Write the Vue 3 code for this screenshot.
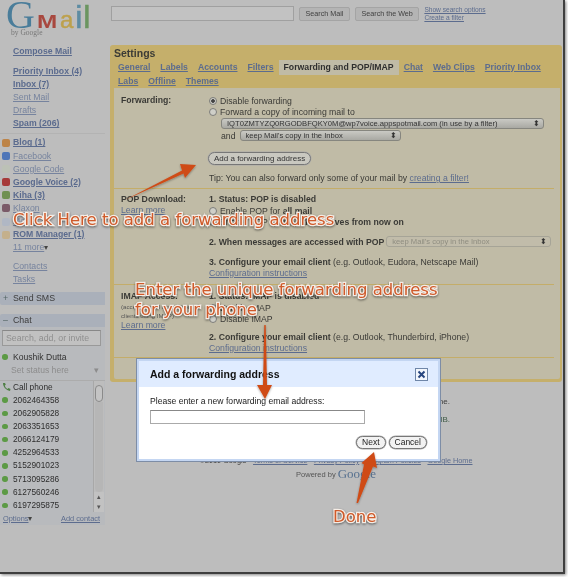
<template>
  <div class="shot">
    <div class="window">
      <aside class="side">
        <div class="logo">
          <span class="lg-g">G</span><span class="lg-m">M</span><span class="lg-a">a</span><span class="lg-i">i</span><span class="lg-l">l</span>
          <span class="by">by Google</span>
        </div>
        <a class="nav compose">Compose Mail</a>
        <div class="group">
          <a v-for="n in mailNav" :key="n.t" class="nav" :class="{ bold: n.b }">{{ n.t }}</a>
        </div>
        <div class="rule"></div>
        <div class="group labels">
          <div v-for="l in labels" :key="l.t" class="label-row">
            <span class="swatch" :style="{ background: l.c }"></span>
            <a class="nav" :class="{ bold: l.b }">{{ l.t }}</a>
          </div>
          <a class="nav more">11 more<span class="tri">▾</span></a>
        </div>
        <div class="group extras">
          <a class="nav">Contacts</a>
          <a class="nav">Tasks</a>
        </div>
        <div class="bar sms"><b>+</b>Send SMS</div>
        <div class="bar chat"><b>–</b>Chat</div>
        <div class="chat-body">
          <div class="chat-search">Search, add, or invite</div>
          <div class="me"><i class="dot"></i>Koushik Dutta</div>
          <div class="status">Set status here<span>▾</span></div>
          <div class="contacts">
            <div class="contact-list">
              <div class="contact">
                <svg class="phone" width="9" height="10" viewBox="0 0 9 10"><path d="M1 1c0 4 3 7 7 8l.5-2-2-1-1 1C4 6 3 5 2.800 3.500l1-.8L3 1z" fill="#4f7f45"/></svg>Call phone
              </div>
              <div v-for="p in phones" :key="p" class="contact"><i class="dot"></i>{{ p }}</div>
            </div>
            <div class="scroll">
              <div class="thumb"></div>
              <div class="track"></div>
              <div class="step">▴</div>
              <div class="step">▾</div>
            </div>
          </div>
          <div class="chat-foot"><a>Options<span class="tri">▾</span></a><a>Add contact</a></div>
        </div>
      </aside>

      <main class="main">
        <div class="search">
          <div class="search-box"></div>
          <div class="btn">Search Mail</div>
          <div class="btn">Search the Web</div>
          <div class="search-links"><a>Show search options</a><a>Create a filter</a></div>
        </div>

        <section class="settings">
          <h1>Settings</h1>
          <div class="tabs">
            <a v-for="t in tabs1" :key="t" :class="{ active: t === 'Forwarding and POP/IMAP' }">{{ t }}</a>
          </div>
          <div class="tabs second">
            <a v-for="t in tabs2" :key="t">{{ t }}</a>
          </div>

          <div class="panel">
            <div class="row fwd">
              <div class="lab"><b>Forwarding:</b></div>
              <div class="val">
                <div class="radio-line"><i class="radio on"></i>Disable forwarding</div>
                <div class="radio-line"><i class="radio"></i>Forward a copy of incoming mail to</div>
                <div class="sel wide">IQT0ZMTYZQ0RGODBFQKY0M@wp7voice.appspotmail.com (in use by a filter)<span>⬍</span></div>
                <div class="and">and <div class="sel keep">keep Mail's copy in the Inbox<span>⬍</span></div></div>
                <div class="pill add">Add a forwarding address</div>
                <div class="tip">Tip: You can also forward only some of your mail by <a>creating a filter!</a></div>
              </div>
            </div>
            <div class="row pop">
              <div class="lab"><b>POP Download:</b><a>Learn more</a></div>
              <div class="val">
                <b class="line">1. Status: POP is disabled</b>
                <div class="radio-line"><i class="radio"></i>Enable POP for <b>all mail</b></div>
                <div class="radio-line"><i class="radio"></i>Enable POP for <b>mail that arrives from now on</b></div>
                <div class="when"><b>2. When messages are accessed with POP</b><div class="sel dim">keep Mail's copy in the Inbox<span>⬍</span></div></div>
                <div class="line cfg"><b>3. Configure your email client</b> (e.g. Outlook, Eudora, Netscape Mail)</div>
                <a class="line">Configuration instructions</a>
              </div>
            </div>
            <div class="row imap">
              <div class="lab">
                <b>IMAP Access:</b>
                <small>(access Gmail from other</small>
                <small>clients using IMAP)</small>
                <a>Learn more</a>
              </div>
              <div class="val">
                <b class="line">1. Status: IMAP is disabled</b>
                <div class="radio-line tight"><i class="radio"></i>Enable IMAP</div>
                <div class="radio-line tight"><i class="radio"></i>Disable IMAP</div>
                <div class="line cfg2"><b>2. Configure your email client</b> (e.g. Outlook, Thunderbird, iPhone)</div>
                <a class="line">Configuration instructions</a>
              </div>
            </div>
            <div class="panel-end"></div>
          </div>
        </section>

        <footer class="foot">
          <div class="usage">Get Gmail on your mobile phone.</div>
          <div class="usage green">You are currently using 3512 MB (47%) of your 7471 MB.</div>
          <div class="legal">©2010 Google - <a>Terms of Service</a> - <a>Privacy Policy</a> - <a>Program Policies</a> - <a>Google Home</a></div>
          <div class="powered">Powered by <span class="goog">Google</span></div>
        </footer>
      </main>
    </div>

    <div class="modal">
      <div class="modal-head">
        <strong>Add a forwarding address</strong>
        <span class="close">
          <svg width="9" height="9" viewBox="0 0 9 9"><path d="M1.500 1.500l6 6M7.500 1.500l-6 6" stroke="#27457f" stroke-width="2"/></svg>
        </span>
      </div>
      <div class="modal-body">
        <p>Please enter a new forwarding email address:</p>
        <div class="modal-input"></div>
        <div class="modal-btns">
          <div class="pill">Next</div>
          <div class="pill">Cancel</div>
        </div>
      </div>
    </div>

    <svg class="arrows" width="568" height="577" viewBox="0 0 568 577">
      <g fill="#cf4b17" filter="url(#ds)">
        <polygon points="125,200 182,170.500 180,164 196,165 185,178 183.500,173.500" />
        <polygon points="264.300,325 265.700,325 267,385 272,385 265,399 257,385 263,385" />
        <polygon points="356.500,503 364,464.500 361.500,463 374,452 377,468 373,466.500 358,503" />
      </g>
      <defs>
        <filter id="ds" x="-20%" y="-20%" width="140%" height="140%">
          <feDropShadow dx="0" dy="1" stdDeviation="1" flood-color="#000" flood-opacity="0.35" />
        </filter>
      </defs>
    </svg>

    <div class="note n1">Click Here to add a forwarding address</div>
    <div class="note n2">Enter the unique forwarding address<br>for your phone</div>
    <div class="note n3">Done</div>
  </div>
</template>

<script setup>
const mailNav = [
  { t: 'Priority Inbox (4)', b: true },
  { t: 'Inbox (7)', b: true },
  { t: 'Sent Mail' },
  { t: 'Drafts' },
  { t: 'Spam (206)', b: true }
]

const labels = [
  { t: 'Blog (1)', c: '#bd8448', b: true },
  { t: 'Facebook', c: '#4f76b8' },
  { t: 'Google Code', c: '#bcc1b6' },
  { t: 'Google Voice (2)', c: '#a63a3a', b: true },
  { t: 'Kiha (3)', c: '#6f9052', b: true },
  { t: 'Klaxon', c: '#7a5a68' },
  { t: 'Mobile', c: '#b0b7c4' },
  { t: 'ROM Manager (1)', c: '#c4b08c', b: true }
]

const phones = [
  '2062464358', '2062905828', '2063351653', '2066124179', '4252964533',
  '5152901023', '5713095286', '6127560246', '6197295875'
]

const tabs1 = ['General', 'Labels', 'Accounts', 'Filters', 'Forwarding and POP/IMAP', 'Chat', 'Web Clips', 'Priority Inbox']
const tabs2 = ['Labs', 'Offline', 'Themes']
</script>

<style>
html, body { margin: 0; background: #fff; }
</style>

<style scoped>
.shot {
  position: relative;
  width: 568px;
  height: 577px;
  overflow: hidden;
  background: #fff;
  font-family: "Liberation Sans", Arial, sans-serif;
  font-size: 10px;
  color: #2e2e2e;
  filter: blur(0.35px);
}
a { color: #5c6c8e; text-decoration: underline; }
.window {
  display: flex;
  width: 563px;
  height: 572px;
  background: #bdbdbd;
  border-right: 2px solid #3f3f3f;
  border-bottom: 2px solid #3f3f3f;
  box-shadow: 1px 1px 3px rgba(0, 0, 0, 0.5);
  overflow: hidden;
}

/* left column */
.side { width: 105px; flex: none; display: flex; flex-direction: column; }
.logo { height: 45px; padding: 0 0 0 6px; position: relative; display: flex; align-items: baseline; line-height: 0.74; white-space: nowrap; box-sizing: border-box; }
.lg-g { font-family: "Liberation Serif", serif; font-size: 40px; color: #4a7d9a; }
.lg-m { font-size: 18px; font-weight: 700; color: #a8483f; transform: scaleX(1.35); transform-origin: left bottom; margin-left: 2px; width: 23px; }
.lg-a { font-size: 24px; color: #bda14d; margin-right: 2px; -webkit-text-stroke: 0.5px #bda14d; }
.lg-i { font-size: 32px; color: #5d8ca3; margin-right: 1px; -webkit-text-stroke: 0.6px #5d8ca3; }
.lg-l { font-size: 32px; color: #6b9560; -webkit-text-stroke: 0.6px #6b9560; }
.logo .by { position: absolute; left: 11px; top: 28px; font-family: "Liberation Serif", serif; font-size: 7.500px; line-height: 9px; color: #777; }
.nav { display: block; height: 13.100px; line-height: 13px; font-size: 8.700px; color: #76839e; white-space: nowrap; padding-left: 13px; }
.nav.bold { font-weight: 700; color: #5b6b8e; }
.compose { font-weight: 700; height: 14px; margin-bottom: 6px; color: #5b6b8e; }
.rule { height: 1px; background: #b3b3b3; margin: 3px 0 2px; }
.label-row { display: flex; align-items: center; height: 13.100px; padding-left: 2px; }
.label-row .nav { padding-left: 3px; }
.swatch { width: 8px; height: 8px; border-radius: 2px; flex: none; }
.tri { font-size: 8px; color: #444; text-decoration: none; display: inline-block; }
.extras { margin-top: 6px; }
.bar { height: 13px; line-height: 13px; font-size: 8.800px; background: #aab0ba; color: #3c3c3c; padding-left: 3px; margin-top: 5px; border-radius: 2px 0 0 2px; }
.bar b { display: inline-block; width: 10px; font-weight: 400; color: #566; }
.chat { margin-top: 9px; }
.chat-body { background: #b8babd; height: 198px; display: flex; flex-direction: column; }
.chat-search { margin: 3px 4px 0 2px; height: 14px; line-height: 14px; border: 1px solid #999; border-top-color: #888; background: #c1c1c1; color: #8f8f8f; font-size: 8.800px; padding-left: 3px; white-space: nowrap; }
.me { height: 13px; line-height: 13px; margin-top: 5px; font-size: 8.600px; color: #333; padding-left: 2px; display: flex; align-items: center; }
.dot { width: 5.500px; height: 5.500px; border-radius: 50%; background: #5c9a45; margin-right: 5.500px; flex: none; display: block; }
.status { height: 13px; line-height: 13px; color: #8c8c8c; font-size: 8.600px; padding-left: 11px; display: flex; justify-content: space-between; padding-right: 6px; }
.contacts { display: flex; margin-top: 3px; border-top: 1px solid #acacac; height: 131px; }
.contact-list { flex: 1; overflow: hidden; }
.contact { height: 13.150px; line-height: 13px; padding-left: 2px; display: flex; align-items: center; font-size: 8.300px; color: #2e2e2e; }
.phone { margin-right: 2px; flex: none; }
.scroll { width: 10px; margin-right: 1px; display: flex; flex-direction: column; background: #bdbdbd; border-left: 1px solid #a8a8a8; }
.thumb { height: 15px; margin: 4px 1px 0; border: 1.500px solid #8a8a8a; border-radius: 5px; background: #c4c4c4; }
.track { flex: 1; background: #b6b6b6; border-radius: 0 0 4px 4px; margin: 0 1px; }
.step { height: 10px; line-height: 10px; font-size: 7px; text-align: center; color: #555; background: #c2c2c2; }
.chat-foot { display: flex; justify-content: space-between; padding: 0 5px 0 3px; height: 13px; line-height: 14px; font-size: 7.400px; }

/* right column */
.main { flex: 1; min-width: 0; padding-left: 5px; }
.search { display: flex; align-items: center; height: 45px; box-sizing: border-box; padding-bottom: 18px; margin-left: 1px; }
.search-box { width: 181px; height: 13px; border: 1px solid #a0a0a0; background: #c2c2c2; margin-right: 5px; }
.btn { height: 12px; line-height: 12px; padding: 0 5.500px; border: 1px solid #a4a4a4; border-radius: 2px; background: #b4b4b4; color: #3f3f3f; font-size: 7.200px; margin-right: 5px; white-space: nowrap; }
.search-links { display: flex; flex-direction: column; font-size: 6.600px; line-height: 7.500px; }
.settings { background: #c5af6b; border-radius: 3px; width: 452px; height: 337px; box-sizing: border-box; padding: 2px 2px 3px 4px; display: flex; flex-direction: column; }
h1 { margin: 0; font-size: 10.500px; line-height: 13px; font-weight: 700; color: #3c3c36; }
.tabs { display: flex; height: 15px; line-height: 15px; padding-left: 4px; font-size: 8.700px; font-weight: 700; color: #5c6c8e; }
.tabs a { margin-right: 10px; white-space: nowrap; }
.tabs a.active { background: #c0bba6; color: #2f2f2f; text-decoration: none; padding: 0 5px; margin: 0 5px 0 -5px; }
.tabs.second { height: 13px; line-height: 13px; }
.panel { flex: 1; background: #c0bba6; padding-right: 3px; display: flex; flex-direction: column; border-radius: 0 0 2px 2px; font-size: 8.700px; color: #3a3a36; }
.row { display: grid; grid-template-columns: 95px 1fr; border-bottom: 1px solid #c4ad69; margin-right: 3px; box-sizing: border-box; }
.fwd { height: 101px; padding-top: 7px; }
.pop { height: 96px; padding-top: 5px; }
.imap { height: 73px; padding-top: 6px; }
.lab { padding-left: 7px; display: flex; flex-direction: column; line-height: 11px; }
.lab small { font-size: 6.200px; line-height: 9px; color: #555; white-space: nowrap; }
.line { display: block; height: 11px; line-height: 11px; white-space: nowrap; }
.radio-line { display: flex; align-items: center; height: 11.500px; white-space: pre; }
.radio { width: 6px; height: 6px; border: 1px solid #7d7d7a; border-radius: 50%; background: #cfcfc8; margin-right: 3px; flex: none; display: block; }
.radio.on { background: radial-gradient(circle, #444 0 1.500px, #cfcfc8 2.200px); }
.sel { display: flex; justify-content: space-between; align-items: center; height: 9px; border: 1px solid #86867f; border-radius: 3px; background: linear-gradient(#c9c9c4, #a9a9a3); font-size: 7.600px; line-height: 9px; padding: 0 3px 0 5px; color: #333; white-space: nowrap; }
.sel span { font-size: 8px; color: #333; }
.wide { width: 313px; margin-left: 12px; }
.and { display: flex; align-items: center; height: 13px; margin-left: 12px; }
.keep { width: 151px; margin-left: 4px; }
.pill { display: inline-block; height: 11px; line-height: 11px; border: 1px solid #777; border-radius: 7px; background: #c9c8c0; padding: 0 5px; font-size: 8px; color: #333; white-space: nowrap; box-shadow: 0 0 0 0.500px #aaa; }
.add { margin: 10px 0 0 -1px; width: fit-content; display: block; }
.tip { height: 11px; line-height: 11px; margin-top: 8px; white-space: nowrap; }
.when { display: flex; align-items: center; height: 13px; margin-top: 7px; white-space: nowrap; }
.dim { width: 155px; margin-left: 2px; background: #c1bcaa; color: #8f8d80; border-color: #a6a497; }
.cfg { margin-top: 9px; }
.cfg2 { margin-top: 7px; }
.panel-end { height: 21px; }

.foot { width: 452px; font-size: 8px; color: #3c3c3c; }
.usage { margin-top: 15px; text-align: right; padding-right: 112px; white-space: nowrap; }
.usage.green { margin-top: 9px; color: #3d5a45; }
.legal { margin-top: 32px; text-align: center; font-size: 7.300px; white-space: nowrap; }
.powered { margin-top: 1px; color: #555; display: flex; justify-content: center; align-items: center; gap: 2px; font-size: 7.500px; white-space: nowrap; }
.goog { font-family: "Liberation Serif", serif; font-size: 13px; color: #56708f; }

/* dialog on top of the dimmed page */
.modal { position: absolute; left: 136px; top: 358px; width: 305px; height: 104px; box-sizing: border-box; border: 1px solid #7d8da6; box-shadow: inset 0 0 0 2px #c4d6f2; background: #fff; }
.modal-head { margin: 2px 2px 0; height: 26px; background: #e0ecff; display: flex; align-items: center; justify-content: space-between; padding: 0 10px 0 11px; }
.modal-head strong { font-size: 10.500px; color: #111; }
.close { width: 11px; height: 11px; border: 1px solid #6f86a8; background: #f2f6fc; display: flex; align-items: center; justify-content: center; }
.modal-body { padding: 9px 13px 0 13px; }
.modal-body p { margin: 0; font-size: 8.600px; line-height: 11px; color: #222; }
.modal-input { width: 213px; height: 12px; border: 1px solid #aaa; border-top-color: #888; margin-top: 3px; }
.modal-btns { display: flex; justify-content: flex-end; gap: 3px; margin-top: 12px; }
.modal-btns .pill { background: #f2f2f2; border-color: #777; font-size: 8.500px; height: 11px; padding: 0 5px; color: #222; }

.arrows { position: absolute; left: 0; top: 0; pointer-events: none; }
.note {
  position: absolute;
  font-family: "DejaVu Sans", sans-serif;
  font-size: 16.500px;
  line-height: 20px;
  color: #cf5a2a;
  white-space: nowrap;
  -webkit-text-stroke: 2.500px #f5ede6;
  paint-order: stroke fill;
  filter: drop-shadow(0 1px 1px rgba(0, 0, 0, 0.5));
}
.n1 { left: 13px; top: 210px; }
.n2 { left: 135px; top: 280px; }
.n3 { left: 333px; top: 507px; }
</style>
